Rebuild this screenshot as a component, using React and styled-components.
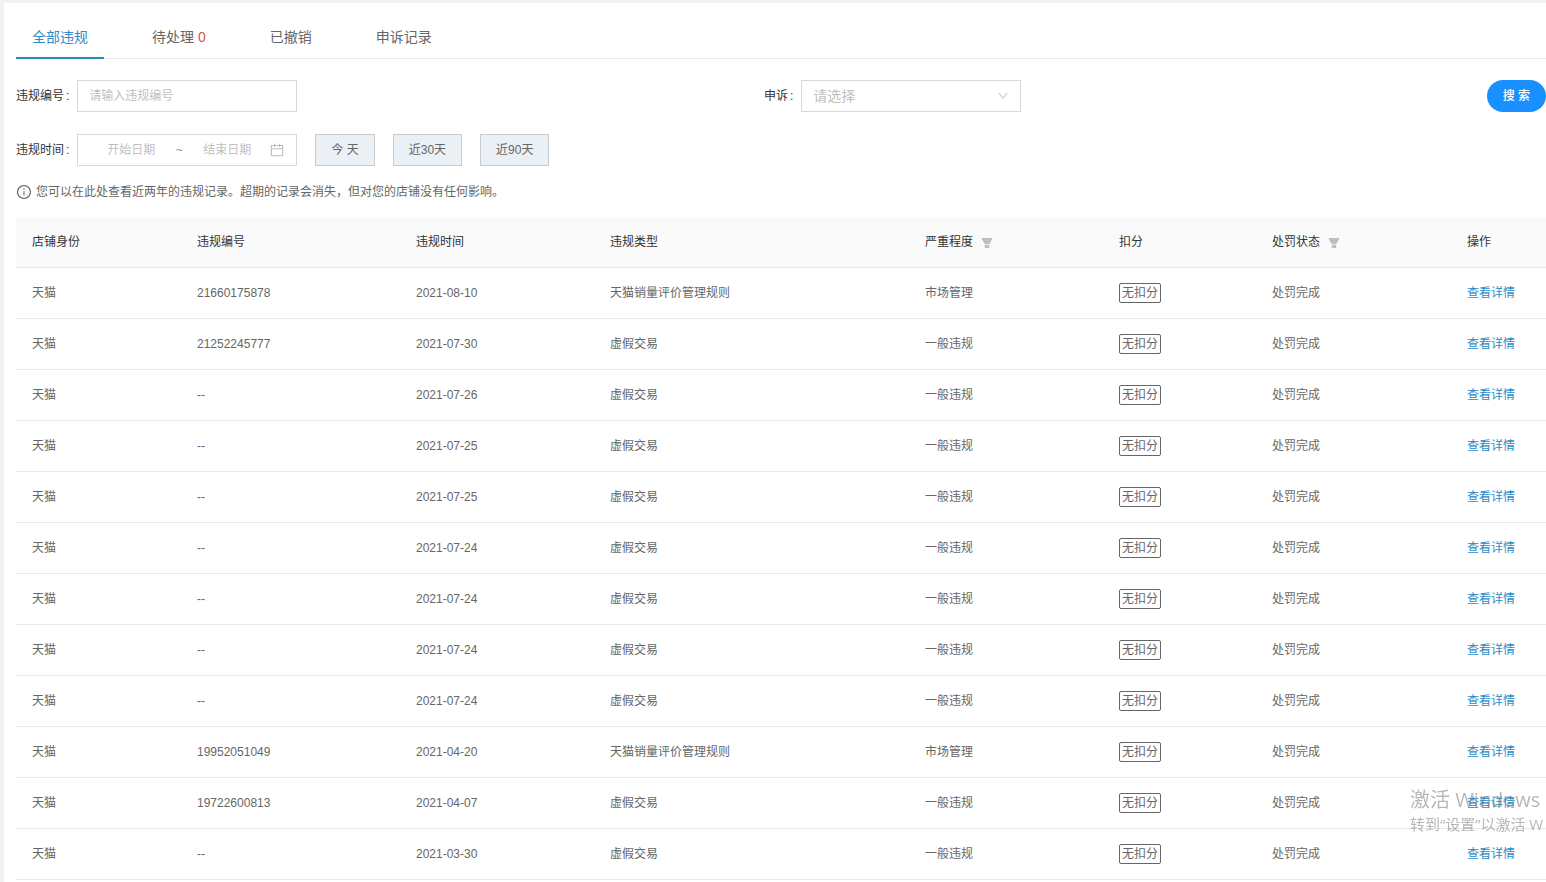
import React from "react";
import styled, { createGlobalStyle } from "styled-components";
import {
  AiFillFilter,
  AiOutlineCalendar,
  AiOutlineDown,
  AiOutlineInfoCircle,
} from "react-icons/ai";

const tabs = [
  { name: "全部违规", active: true },
  { name: "待处理", count: 0 },
  { name: "已撤销" },
  { name: "申诉记录" },
];

const columns = [
  { title: "店铺身份", width: 165 },
  { title: "违规编号", width: 219 },
  { title: "违规时间", width: 194 },
  { title: "违规类型" },
  { title: "严重程度", width: 194, filter: true },
  { title: "扣分", width: 153 },
  { title: "处罚状态", width: 195, filter: true },
  { title: "操作", width: 95 },
];

const MARKET = ["天猫销量评价管理规则", "市场管理"];
const FAKE = ["虚假交易", "一般违规"];

const records = [
  ["21660175878", "2021-08-10", ...MARKET],
  ["21252245777", "2021-07-30", ...FAKE],
  ["--", "2021-07-26", ...FAKE],
  ["--", "2021-07-25", ...FAKE],
  ["--", "2021-07-25", ...FAKE],
  ["--", "2021-07-24", ...FAKE],
  ["--", "2021-07-24", ...FAKE],
  ["--", "2021-07-24", ...FAKE],
  ["--", "2021-07-24", ...FAKE],
  ["19952051049", "2021-04-20", ...MARKET],
  ["19722600813", "2021-04-07", ...FAKE],
  ["--", "2021-03-30", ...FAKE],
];

function Filters() {
  return (
    <Form onSubmit={(e) => e.preventDefault()}>
      <FilterRow>
        <Field>
          <Label htmlFor="violation-id">违规编号</Label>
          <TextInput id="violation-id" placeholder="请输入违规编号" />
        </Field>
        <FieldWithAction>
          <Field>
            <Label htmlFor="appeal">申诉</Label>
            <SelectBox>
              <Select id="appeal" defaultValue="">
                <option value="">请选择</option>
                <option value="yes">已申诉</option>
                <option value="no">未申诉</option>
              </Select>
              <AiOutlineDown size={12} />
            </SelectBox>
          </Field>
          <SearchButton type="submit">搜 索</SearchButton>
        </FieldWithAction>
      </FilterRow>

      <Field>
        <Label htmlFor="start-date">违规时间</Label>
        <DateRange>
          <DateInput id="start-date" placeholder="开始日期" />
          <span>~</span>
          <DateInput aria-label="结束日期" placeholder="结束日期" />
          <AiOutlineCalendar size={16} />
        </DateRange>
        <QuickRanges>
          <RangeButton type="button">今 天</RangeButton>
          <RangeButton type="button">近30天</RangeButton>
          <RangeButton type="button">近90天</RangeButton>
        </QuickRanges>
      </Field>
    </Form>
  );
}

function Records() {
  return (
    <Table>
      <colgroup>
        {columns.map((col) => (
          <col key={col.title} width={col.width} />
        ))}
      </colgroup>
      <thead>
        <tr>
          {columns.map((col) => (
            <Th key={col.title} scope="col">
              {col.title}
              {col.filter && (
                <FilterButton type="button" aria-label={`筛选${col.title}`}>
                  <AiFillFilter size={14} />
                </FilterButton>
              )}
            </Th>
          ))}
        </tr>
      </thead>
      <tbody>
        {records.map(([id, date, type, level], i) => (
          <tr key={i}>
            <Td>天猫</Td>
            <Td>{id}</Td>
            <Td>{date}</Td>
            <Td>{type}</Td>
            <Td>{level}</Td>
            <Td>
              <Tag>无扣分</Tag>
            </Td>
            <Td>处罚完成</Td>
            <Td>
              <DetailLink href="#detail">查看详情</DetailLink>
            </Td>
          </tr>
        ))}
      </tbody>
    </Table>
  );
}

function App() {
  return (
    <>
      <GlobalStyle />
      <Page>
        <Tabs>
          {tabs.map((tab) => (
            <Tab key={tab.name} type="button" $active={tab.active}>
              {tab.name}
              {tab.count !== undefined && <Count> {tab.count}</Count>}
            </Tab>
          ))}
        </Tabs>
        <Filters />
        <Notice>
          <AiOutlineInfoCircle size={16} />
          您可以在此处查看近两年的违规记录。超期的记录会消失，但对您的店铺没有任何影响。
        </Notice>
        <Records />
      </Page>
      <Watermark>
        <WatermarkTitle>激活 Windows</WatermarkTitle>
        <WatermarkText>转到“设置”以激活 W</WatermarkText>
      </Watermark>
    </>
  );
}

export default App;

const GlobalStyle = createGlobalStyle`
  * {
    box-sizing: border-box;
  }

  body {
    margin: 0;
    background: #f2f2f2;
    color: #666;
    font-family: "Liberation Sans", "Noto Sans CJK SC", sans-serif;
    font-size: 12px;
    line-height: 20px;
  }

  button,
  input,
  select {
    font: inherit;
    color: inherit;
  }
`;

const Page = styled.main`
  min-height: calc(100vh - 3px);
  margin: 3px 0 0 4px;
  padding: 11px 0 0 12px;
  background: #fff;
`;

const Tabs = styled.nav`
  display: flex;
  gap: 32px;
  border-bottom: 1px solid #e8e8e8;
`;

const Tab = styled.button`
  margin-bottom: -1px;
  padding: 12px 16px 9px;
  border: none;
  border-bottom: 2px solid ${(p) => (p.$active ? "#2f8cb3" : "transparent")};
  background: none;
  color: ${(p) => (p.$active ? "#2f8ac8" : "#666")};
  font-size: 14px;
  line-height: 22px;
  cursor: pointer;
`;

const Count = styled.span`
  color: #d9534f;
  white-space: pre;
`;

const Form = styled.form`
  display: flex;
  flex-direction: column;
  gap: 22px;
  padding-top: 21px;
`;

const FilterRow = styled.div`
  display: grid;
  grid-template-columns: 22fr 23fr;
`;

const Field = styled.div`
  display: flex;
  align-items: center;
`;

const FieldWithAction = styled.div`
  display: flex;
  align-items: center;
  justify-content: space-between;
`;

const Label = styled.label`
  color: #333;

  &::after {
    content: ":";
    margin: 0 8px 0 2px;
  }
`;

const TextInput = styled.input`
  width: 220px;
  height: 32px;
  padding: 0 11px;
  border: 1px solid #d9d9d9;
  outline: none;

  &::placeholder {
    color: #bfbfbf;
  }

  &:focus {
    border-color: #1890ff;
  }
`;

const SelectBox = styled.div`
  position: relative;
  width: 220px;

  svg {
    position: absolute;
    top: 10px;
    right: 12px;
    color: #bfbfbf;
    pointer-events: none;
  }
`;

const Select = styled.select`
  display: block;
  width: 100%;
  height: 32px;
  padding: 0 11px;
  border: 1px solid #d9d9d9;
  border-radius: 0;
  background: #fff;
  color: #bfbfbf;
  font-size: 14px;
  appearance: none;
`;

const SearchButton = styled.button`
  height: 32px;
  padding: 0 16px;
  border: none;
  border-radius: 16px;
  background: #1890ff;
  color: #fff;
  font-weight: 500;
  cursor: pointer;
`;

const DateRange = styled.div`
  display: flex;
  align-items: center;
  width: 220px;
  height: 32px;
  padding: 0 11px;
  border: 1px solid #d9d9d9;

  span {
    flex: none;
    width: 12px;
    text-align: center;
    color: #8c8c8c;
  }

  svg {
    flex: none;
    color: #bfbfbf;
  }
`;

const DateInput = styled.input`
  flex: 1;
  min-width: 0;
  padding: 0;
  border: none;
  outline: none;
  background: none;
  text-align: center;

  &::placeholder {
    color: #bfbfbf;
  }
`;

const QuickRanges = styled.div`
  display: flex;
  gap: 18px;
  margin-left: 18px;
`;

const RangeButton = styled.button`
  height: 32px;
  padding: 0 15px;
  border: 1px solid #c8ccd1;
  background: #ebf0f5;
  cursor: pointer;
`;

const Notice = styled.p`
  display: flex;
  align-items: center;
  gap: 4px;
  margin: 16px 0 15px;
`;

const Table = styled.table`
  width: 100%;
  min-width: 1200px;
  table-layout: fixed;
  border-collapse: separate;
  border-spacing: 0;
  text-align: left;
`;

const Th = styled.th`
  height: 51px;
  padding: 0 16px;
  border-bottom: 1px solid #e8e8e8;
  background: #fafafa;
  color: #333;
  font-weight: 400;
  white-space: nowrap;
`;

const Td = styled.td`
  height: 51px;
  padding: 0 16px;
  border-bottom: 1px solid #e8e8e8;
  white-space: nowrap;
`;

const FilterButton = styled.button`
  margin-left: 7px;
  padding: 0;
  border: none;
  background: none;
  color: #bfbfbf;
  vertical-align: middle;
  cursor: pointer;

  svg {
    display: block;
  }
`;

const Tag = styled.span`
  display: inline-block;
  padding: 0 2px;
  border: 1px solid #666;
  border-radius: 2px;
  line-height: 18px;
`;

const DetailLink = styled.a`
  color: #1f8bc8;
  text-decoration: none;
`;

const Watermark = styled.div`
  position: fixed;
  right: 0;
  bottom: 48px;
  width: 136px;
  color: rgba(135, 135, 135, 0.6);
  font-family: "Open Sans", "Noto Sans CJK SC", sans-serif;
  white-space: nowrap;
  pointer-events: none;
`;

const WatermarkTitle = styled.div`
  font-size: 20px;
  line-height: 28px;
`;

const WatermarkText = styled.div`
  font-size: 15px;
  line-height: 20px;
`;
